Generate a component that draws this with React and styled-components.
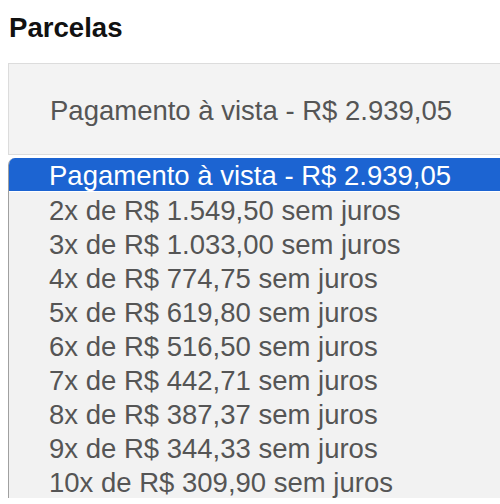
import React from "react";
import styled, { createGlobalStyle } from "styled-components";

const GlobalStyle = createGlobalStyle`
  html, body {
    margin: 0;
    padding: 0;
    background: #fff;
    overflow: hidden;
  }
  body {
    font-family: "Liberation Sans", Arial, sans-serif;
  }
`;

const Container = styled.div`
  width: 500px;
  height: 504px;
  overflow: hidden;
  padding-left: 8px;
  box-sizing: border-box;
`;

const Label = styled.h3`
  margin: 0;
  padding: 14px 0 0 1px;
  height: 63px;
  box-sizing: border-box;
  font-size: 27.6px;
  line-height: 28px;
  font-weight: 700;
  color: #111;
`;

const SelectBox = styled.div`
  width: 520px;
  height: 92px;
  box-sizing: border-box;
  border: 1px solid #dcdcdc;
  background: #f3f3f3;
  display: flex;
  align-items: center;
  padding: 3px 0 0 41px;
  font-size: 27.5px;
  color: #555;
`;

const Dropdown = styled.ul`
  list-style: none;
  margin: 3px 0 0 0;
  padding: 0;
  width: 520px;
  box-sizing: border-box;
  border-left: 1px solid #a0a0a0;
  border-top-left-radius: 7px;
  background: #f2f2f2;
  overflow: hidden;
`;

const Option = styled.li`
  height: 34px;
  box-sizing: border-box;
  display: flex;
  align-items: center;
  padding: 3px 0 0 40px;
  font-size: 27.5px;
  color: ${(p) => (p.$active ? "#fff" : "#555")};
  background: ${(p) => (p.$active ? "#1c64d2" : "transparent")};
  border-bottom: ${(p) => (p.$active ? "1px solid #fff" : "none")};
  white-space: nowrap;
`;

const options = [
  "Pagamento à vista - R$ 2.939,05",
  "2x de R$ 1.549,50 sem juros",
  "3x de R$ 1.033,00 sem juros",
  "4x de R$ 774,75 sem juros",
  "5x de R$ 619,80 sem juros",
  "6x de R$ 516,50 sem juros",
  "7x de R$ 442,71 sem juros",
  "8x de R$ 387,37 sem juros",
  "9x de R$ 344,33 sem juros",
  "10x de R$ 309,90 sem juros",
];

export default function App() {
  return (
    <Container>
      <GlobalStyle />
      <Label>Parcelas</Label>
      <SelectBox>Pagamento à vista - R$ 2.939,05</SelectBox>
      <Dropdown>
        {options.map((o, i) => (
          <Option key={o} $active={i === 0}>
            {o}
          </Option>
        ))}
      </Dropdown>
    </Container>
  );
}
